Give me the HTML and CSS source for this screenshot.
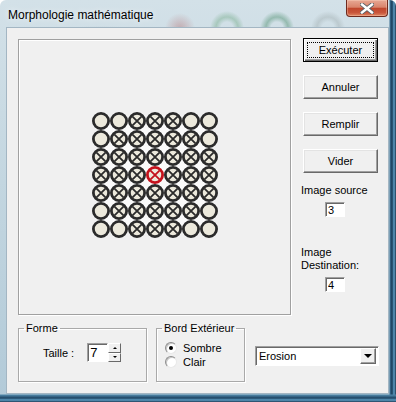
FILE: index.html
```html
<!DOCTYPE html>
<html lang="fr">
<head>
    <meta charset="UTF-8" />
    <title>Morphologie mathématique</title>
    <link rel="stylesheet" href="styles.css">
</head>
<body>
<div class="window">
    <div class="titlebar">
        <span class="title">Morphologie mathématique</span>
        <button class="close" type="button" aria-label="Fermer">
            <svg width="14" height="11" viewBox="0 0 14 11">
                <path d="M2 1.5L12 9.5M12 1.5L2 9.5" stroke="#5a6066" stroke-width="4.2" stroke-linecap="square"/>
                <path d="M2 1.5L12 9.5M12 1.5L2 9.5" stroke="#fff" stroke-width="2.4" stroke-linecap="square"/>
            </svg>
        </button>
    </div>

    <div class="client">
        <div class="top-row">
            <!-- Structuring element preview -->
            <div class="picture">
                <svg class="grid" width="128" height="128" viewBox="-1 -1 128 128">
                    <defs>
                        <g id="ring">
                            <circle cx="9" cy="9" r="7.6" fill="#ece9dc" stroke="#2b2b2b" stroke-width="2.8"/>
                        </g>
                        <g id="cross">
                            <use href="#ring"/>
                            <path d="M4.3 4.3L13.7 13.7M13.7 4.3L4.3 13.7" stroke="#2b2b2b" stroke-width="1.8"/>
                        </g>
                        <g id="origin">
                            <circle cx="9" cy="9" r="7.6" fill="#ece9dc" stroke="#c4121c" stroke-width="2.8"/>
                            <path d="M4.3 4.3L13.7 13.7M13.7 4.3L4.3 13.7" stroke="#c4121c" stroke-width="1.8"/>
                        </g>
                    </defs>
                    <rect x="9" y="9" width="108" height="108" fill="#fafafa"/>

                    <use href="#ring" x="0" y="0"/><use href="#ring" x="18" y="0"/><use href="#cross" x="36" y="0"/><use href="#cross" x="54" y="0"/><use href="#cross" x="72" y="0"/><use href="#ring" x="90" y="0"/><use href="#ring" x="108" y="0"/>
                    <use href="#ring" x="0" y="18"/><use href="#cross" x="18" y="18"/><use href="#cross" x="36" y="18"/><use href="#cross" x="54" y="18"/><use href="#cross" x="72" y="18"/><use href="#cross" x="90" y="18"/><use href="#ring" x="108" y="18"/>
                    <use href="#cross" x="0" y="36"/><use href="#cross" x="18" y="36"/><use href="#cross" x="36" y="36"/><use href="#cross" x="54" y="36"/><use href="#cross" x="72" y="36"/><use href="#cross" x="90" y="36"/><use href="#cross" x="108" y="36"/>
                    <use href="#cross" x="0" y="54"/><use href="#cross" x="18" y="54"/><use href="#cross" x="36" y="54"/><use href="#origin" x="54" y="54"/><use href="#cross" x="72" y="54"/><use href="#cross" x="90" y="54"/><use href="#cross" x="108" y="54"/>
                    <use href="#cross" x="0" y="72"/><use href="#cross" x="18" y="72"/><use href="#cross" x="36" y="72"/><use href="#cross" x="54" y="72"/><use href="#cross" x="72" y="72"/><use href="#cross" x="90" y="72"/><use href="#cross" x="108" y="72"/>
                    <use href="#ring" x="0" y="90"/><use href="#cross" x="18" y="90"/><use href="#cross" x="36" y="90"/><use href="#cross" x="54" y="90"/><use href="#cross" x="72" y="90"/><use href="#cross" x="90" y="90"/><use href="#ring" x="108" y="90"/>
                    <use href="#ring" x="0" y="108"/><use href="#ring" x="18" y="108"/><use href="#cross" x="36" y="108"/><use href="#cross" x="54" y="108"/><use href="#cross" x="72" y="108"/><use href="#ring" x="90" y="108"/><use href="#ring" x="108" y="108"/>
                </svg>
            </div>

            <div class="side">
                <button class="btn btn-default" type="button"><span class="focus">Exécuter</span></button>
                <button class="btn" type="button">Annuler</button>
                <button class="btn" type="button">Remplir</button>
                <button class="btn" type="button">Vider</button>

                <label class="side-label" for="src">Image source</label>
                <input class="box" id="src" type="text" value="3" />

                <label class="side-label label-dest" for="dst">Image Destination:</label>
                <input class="box" id="dst" type="text" value="4" />
            </div>
        </div>

        <div class="bottom-row">
            <fieldset class="group group-forme">
                <legend>Forme</legend>
                <div class="taille">
                    <label for="taille">Taille :</label>
                    <div class="spinner">
                        <input class="box spin-box" id="taille" type="text" value="7" />
                        <div class="spin-btns">
                            <span class="spin-btn up"></span>
                            <span class="spin-btn down"></span>
                        </div>
                    </div>
                </div>
            </fieldset>

            <fieldset class="group group-bord">
                <legend>Bord Extérieur</legend>
                <div class="radios">
                    <div class="radio-row"><span class="radio checked"></span>Sombre</div>
                    <div class="radio-row"><span class="radio"></span>Clair</div>
                </div>
            </fieldset>

            <div class="combo">
                <span class="combo-text">Erosion</span>
                <span class="combo-btn"></span>
            </div>
        </div>
    </div>
</div>
</body>
</html>
```

FILE: styles.css
```css
* {
    box-sizing: border-box;
}

body {
    margin: 0;
    background: #fff;
    font-family: "Liberation Sans", Arial, sans-serif;
    font-size: 11px;
    color: #000;
}

/* Window frame */
.window {
    width: 396px;
    height: 402px;
    display: flex;
    flex-direction: column;
    overflow: hidden;
    border-radius: 6px 6px 0 0;
    background:
        linear-gradient(to bottom, transparent 394px, #4f86a8 395px, #1d4463 398px, #5d9cc2 400px, #203f5a 402px),
        linear-gradient(to right, transparent 389px, #3a6d90 390px, #173b57 392px, #5f9fc6 394px, #1b3850 396px),
        linear-gradient(180deg, #d3e1e8 0%, #c3d6e0 45%, #b2cad8 100%);
}

.titlebar {
    height: 27px;
    display: flex;
    align-items: flex-start;
    padding-left: 8px;
    background:
        radial-gradient(circle at 180px 28px, rgba(170, 80, 80, 0.35) 0, rgba(170, 80, 80, 0) 15px),
        radial-gradient(circle at 227px 28px, transparent 6px, rgba(80, 150, 100, 0.32) 11px, transparent 17px),
        radial-gradient(circle at 277px 28px, transparent 6px, rgba(50, 125, 85, 0.38) 11px, transparent 17px),
        radial-gradient(circle at 328px 28px, transparent 6px, rgba(140, 152, 152, 0.3) 11px, transparent 17px),
        radial-gradient(ellipse at 100px 30px, rgba(120, 140, 140, 0.2) 0, transparent 40px);
}

.title {
    margin-top: 8px;
    font-size: 12px;
    line-height: 14px;
    color: #000;
    text-shadow: 0 0 6px rgba(255, 255, 255, 0.9);
}

.close {
    margin-left: auto;
    margin-right: 8px;
    width: 42px;
    height: 17px;
    padding: 0;
    display: flex;
    align-items: center;
    justify-content: center;
    border: 1px solid #6e2a1e;
    border-top: none;
    border-radius: 0 0 4px 4px;
    background: linear-gradient(180deg, #e7a894 0%, #d9846c 45%, #c0472d 52%, #c8553a 78%, #e08763 100%);
    box-shadow: inset 0 0 0 1px rgba(255, 220, 200, 0.35);
}

.close svg {
    display: block;
}

/* Client area */
.client {
    flex: 1;
    margin: 0 7px 8px 6px;
    padding: 11px 0 0 11px;
    background: #f0f0f0;
    border: 1px solid #a3b6c3;
}

.top-row {
    display: flex;
    align-items: flex-start;
}

.picture {
    width: 273px;
    height: 276px;
    display: flex;
    align-items: center;
    justify-content: center;
    padding-bottom: 4px;
    border: 1px solid #a0a0a0;
    box-shadow: 1px 1px 0 #fff, inset 1px 1px 0 #fff;
}

.grid {
    display: block;
}

.side {
    width: 75px;
    margin-left: 12px;
    margin-top: -1px;
    display: flex;
    flex-direction: column;
    align-items: flex-start;
}

/* Classic 3D push buttons */
.btn {
    width: 75px;
    height: 24px;
    padding: 0;
    display: flex;
    align-items: center;
    justify-content: center;
    font: inherit;
    color: #000;
    background: #f0f0f0;
    border: 1px solid;
    border-color: #fff #696969 #696969 #fff;
    box-shadow: inset -1px -1px 0 #a0a0a0, inset 1px 1px 0 #e3e3e3;
}

.btn + .btn {
    margin-top: 13px;
}

.btn-default {
    border-color: #000;
    box-shadow: inset 1px 1px 0 #fff, inset -1px -1px 0 #696969, inset -2px -2px 0 #a0a0a0;
}

.focus {
    align-self: stretch;
    flex: 1;
    margin: 3px;
    display: flex;
    align-items: center;
    justify-content: center;
    border: 1px dotted #000;
}

.side-label {
    display: block;
    width: 72px;
    margin-left: -2px;
    line-height: 13px;
}

.btn + .side-label {
    margin-top: 11px;
}

.label-dest {
    margin-top: 29px;
}

/* Sunken text boxes */
.box {
    display: block;
    width: 20px;
    height: 15px;
    margin: 5px 0 0 22px;
    padding: 0 0 0 2px;
    font: inherit;
    line-height: 13px;
    color: #000;
    background: #fff;
    border: 1px solid;
    border-color: #a0a0a0 #fff #fff #a0a0a0;
    box-shadow: inset 1px 1px 0 #696969;
    outline: none;
}

/* Bottom row */
.bottom-row {
    display: flex;
    align-items: flex-start;
    margin-top: 7px;
}

.group {
    margin: 0;
    padding: 0;
    height: 60px;
    border: 1px solid #a9a9a9;
    box-shadow: 1px 1px 0 #fff, inset 1px 1px 0 #fff;
}

.group legend {
    margin-left: 5px;
    padding: 0 2px;
    line-height: 13px;
}

.group-forme {
    width: 129px;
}

.taille {
    display: flex;
    align-items: center;
    margin: 8px 0 0 24px;
}

.spinner {
    display: flex;
    margin-left: 13px;
}

.spin-box {
    width: 21px;
    height: 19px;
    margin: 0;
    font-size: 13px;
    line-height: 17px;
}

.spin-btns {
    width: 13px;
    height: 19px;
    display: flex;
    flex-direction: column;
}

.spin-btn {
    flex: 1;
    display: flex;
    align-items: center;
    justify-content: center;
    background: #f0f0f0;
    border: 1px solid;
    border-color: #fff #696969 #696969 #fff;
}

.spin-btn::after {
    content: '';
    width: 0;
    height: 0;
    border-left: 2px solid transparent;
    border-right: 2px solid transparent;
}

.spin-btn.up::after {
    border-bottom: 2px solid #000;
}

.spin-btn.down::after {
    border-top: 2px solid #000;
}

.group-bord {
    width: 89px;
    margin-left: 9px;
}

.radios {
    margin: 6px 0 0 8px;
}

.radio-row {
    display: flex;
    align-items: center;
    height: 14px;
}

.radio {
    position: relative;
    width: 12px;
    height: 12px;
    margin-right: 6px;
    border-radius: 50%;
    background: #fff;
    border: 1px solid;
    border-color: #8d8d8d #e8e8e8 #e8e8e8 #8d8d8d;
    box-shadow: inset 1px 1px 0 #c6c6c6;
}

.radio.checked::after {
    content: '';
    position: absolute;
    left: 3px;
    top: 3px;
    width: 4px;
    height: 4px;
    border-radius: 50%;
    background: #000;
}

/* Combo box */
.combo {
    width: 124px;
    height: 20px;
    margin: 24px 0 0 10px;
    display: flex;
    align-items: center;
    padding: 2px;
    background: #fff;
    border: 1px solid;
    border-color: #a0a0a0 #fff #fff #a0a0a0;
    box-shadow: inset 1px 1px 0 #696969;
}

.combo-text {
    flex: 1;
    padding-left: 1px;
}

.combo-btn {
    width: 16px;
    height: 16px;
    display: flex;
    align-items: center;
    justify-content: center;
    background: #f0f0f0;
    border: 1px solid;
    border-color: #fff #696969 #696969 #fff;
    box-shadow: inset -1px -1px 0 #a0a0a0;
}

.combo-btn::after {
    content: '';
    width: 0;
    height: 0;
    border-left: 4px solid transparent;
    border-right: 4px solid transparent;
    border-top: 4px solid #000;
}
```
